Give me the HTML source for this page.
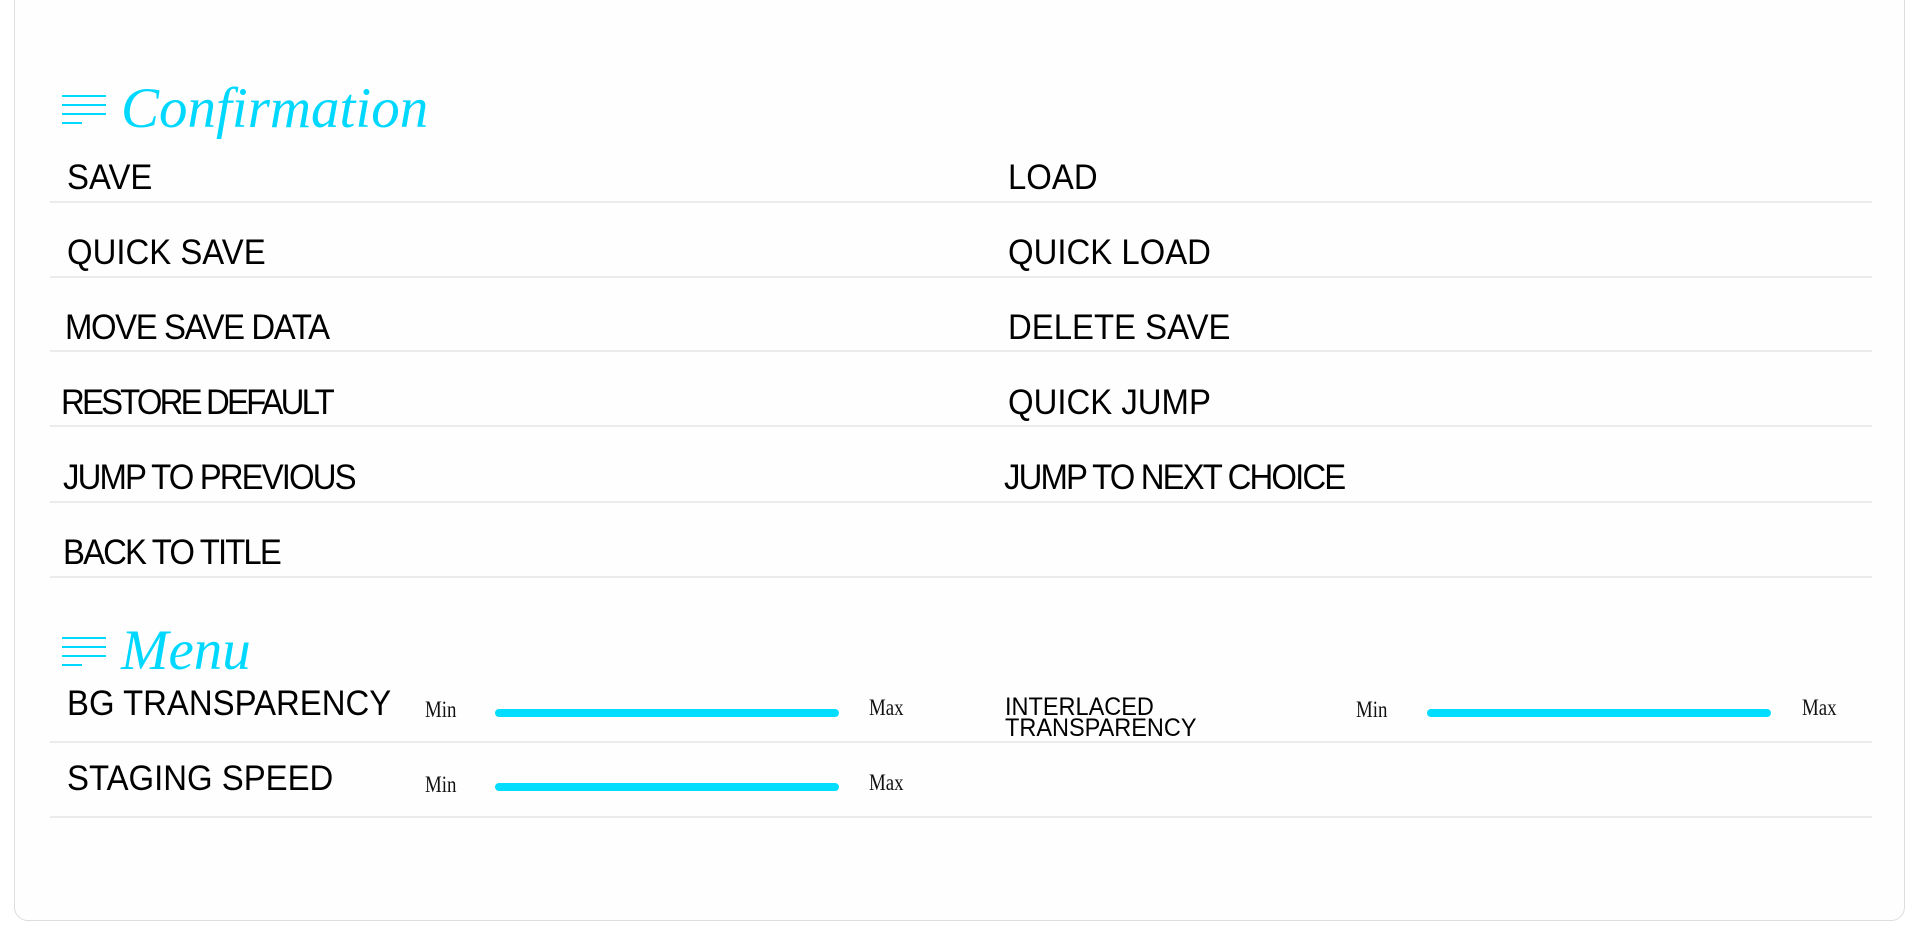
<!DOCTYPE html>
<html><head><meta charset="utf-8"><style>
html,body{margin:0;padding:0;width:1920px;height:938px;background:#fff;overflow:hidden;position:relative;font-family:"Liberation Sans",sans-serif}
.panel{position:absolute;left:14px;top:-20px;width:1889px;height:939px;border:1.5px solid #ddd;border-radius:14px;background:#fefefe}
.h{position:absolute;left:121px;font-family:"Liberation Serif",serif;font-style:italic;color:#00d8ff;font-size:57px;line-height:1}
.ic{position:absolute;left:62px;width:44px;height:30px}
.ic i{position:absolute;left:0;height:2px;background:#00d8ff;width:44px}
.t{position:absolute;font-size:35px;color:#000;line-height:1;transform-origin:left bottom;transform:scaleX(0.94);white-space:nowrap}
.sep{position:absolute;left:50px;width:1822px;height:2px;background:#ebebeb}
.mm{position:absolute;font-family:"Liberation Serif",serif;font-size:23px;color:#111;transform:scaleX(0.82);transform-origin:left}
.sl{position:absolute;height:8px;border-radius:4px;background:#00ddff}
</style></head><body>
<div class="panel"></div>

<div class="ic" style="top:95px"><i style="top:0"></i><i style="top:9px"></i><i style="top:18px"></i><i style="top:27px;width:20px"></i></div>
<div class="h" style="top:80px">Confirmation</div>

<div class="t" style="left:67px;top:160px">SAVE</div><div class="t" style="left:1008px;top:160px">LOAD</div>
<div class="sep" style="top:201px"></div>
<div class="t" style="left:67px;top:235px">QUICK SAVE</div><div class="t" style="left:1008px;top:235px">QUICK LOAD</div>
<div class="sep" style="top:276px"></div>
<div class="t" style="left:65px;top:310px;letter-spacing:-1.5px">MOVE SAVE DATA</div><div class="t" style="left:1008px;top:310px">DELETE SAVE</div>
<div class="sep" style="top:350px"></div>
<div class="t" style="left:61px;top:385px;letter-spacing:-3px">RESTORE DEFAULT</div><div class="t" style="left:1008px;top:385px">QUICK JUMP</div>
<div class="sep" style="top:425px"></div>
<div class="t" style="left:63px;top:460px;letter-spacing:-2px">JUMP TO PREVIOUS</div><div class="t" style="left:1004px;top:460px;letter-spacing:-2px">JUMP TO NEXT CHOICE</div>
<div class="sep" style="top:501px"></div>
<div class="t" style="left:63px;top:535px;letter-spacing:-2px">BACK TO TITLE</div>
<div class="sep" style="top:576px"></div>

<div class="ic" style="top:637px"><i style="top:0"></i><i style="top:9px"></i><i style="top:18px"></i><i style="top:27px;width:20px"></i></div>
<div class="h" style="top:622px">Menu</div>

<div class="t" style="left:67px;top:686px">BG TRANSPARENCY</div>
<div class="mm" style="left:425px;top:697px">Min</div>
<div class="sl" style="left:495px;top:709px;width:344px"></div>
<div class="mm" style="left:869px;top:695px">Max</div>
<div class="t" style="left:1005px;top:697px;font-size:25px;line-height:21px">INTERLACED<br>TRANSPARENCY</div>
<div class="mm" style="left:1356px;top:697px">Min</div>
<div class="sl" style="left:1427px;top:709px;width:344px"></div>
<div class="mm" style="left:1802px;top:695px">Max</div>
<div class="sep" style="top:741px"></div>
<div class="t" style="left:67px;top:761px">STAGING SPEED</div>
<div class="mm" style="left:425px;top:772px">Min</div>
<div class="sl" style="left:495px;top:783px;width:344px"></div>
<div class="mm" style="left:869px;top:770px">Max</div>
<div class="sep" style="top:816px"></div>
</body></html>
